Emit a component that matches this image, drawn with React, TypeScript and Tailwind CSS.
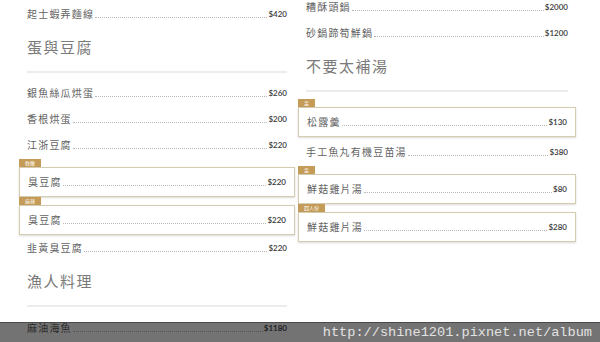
import React from 'react';

type Item = { name: string; price: string; tag?: string };

const font = { fontFamily: '"Noto Sans CJK TC", "Noto Sans", sans-serif' };

const Row: React.FC<{ item: Item }> = ({ item }) => (
  <div className="flex items-center h-[26px] px-[8px]">
    <span className="text-[10px] tracking-[1.2px] text-[#626262] leading-none" style={font}>
      {item.name}
    </span>
    <span className="flex-1 mx-[1px] self-center mt-[7px] border-b border-dotted border-[#b8b8b8]" />
    <span className="text-[8px] font-semibold text-[#3a3a3a] leading-none font-['Lato',sans-serif]">
      {item.price}
    </span>
  </div>
);

const BoxedRow: React.FC<{ item: Item }> = ({ item }) => (
  <div className="flex flex-col">
    <div
      className="self-start h-[8px] px-[6px] bg-[#c49b57] text-white text-[5px] leading-[8px]"
      style={font}
    >
      {item.tag}
    </div>
    <div className="h-[30px] flex flex-col justify-center border border-[#d3ccb1] shadow-[0_1px_2px_rgba(0,0,0,0.15)] bg-white">
      <Row item={item} />
    </div>
  </div>
);

const Heading: React.FC<{ title: string }> = ({ title }) => (
  <div className="h-[46px] flex flex-col justify-end mx-[8px]">
    <div
      className="text-[15px] tracking-[1.5px] text-[#7a7a7a] leading-none mb-[17px]"
      style={font}
    >
      {title}
    </div>
    <div className="h-[2px] bg-[#ececec]" />
  </div>
);

const App: React.FC = () => {
  return (
    <div className="relative w-[600px] h-[342px] bg-white overflow-hidden">
      <div className="flex pl-[19px]">
        {/* Left column */}
        <div className="w-[276px] flex flex-col pt-[1px]">
          <Row item={{ name: '起士蝦弄麵線', price: '$420' }} />
          <Heading title="蛋與豆腐" />
          <div className="h-[7px]" />
          <Row item={{ name: '銀魚絲瓜烘蛋', price: '$260' }} />
          <Row item={{ name: '香根烘蛋', price: '$200' }} />
          <Row item={{ name: '江浙豆腐', price: '$220' }} />
          <div className="h-[1px]" />
          <BoxedRow item={{ name: '臭豆腐', price: '$220', tag: '軟嫩' }} />
          <BoxedRow item={{ name: '臭豆腐', price: '$220', tag: '麻辣' }} />
          <Row item={{ name: '韭黃臭豆腐', price: '$220' }} />
          <Heading title="漁人料理" />
          <div className="h-[8px]" />
          <Row item={{ name: '麻油海魚', price: '$1180' }} />
        </div>

        {/* Right column */}
        <div className="w-[278px] ml-[3px] flex flex-col mt-[-6px]">
          <Row item={{ name: '糟酥頭鍋', price: '$2000' }} />
          <Row item={{ name: '砂鍋蹄筍鮮鍋', price: '$1200' }} />
          <Heading title="不要太補湯" />
          <div className="h-[7px]" />
          <BoxedRow item={{ name: '松露羹', price: '$130', tag: '盅' }} />
          <div className="h-[2px]" />
          <Row item={{ name: '手工魚丸有機豆苗湯', price: '$380' }} />
          <div className="h-[1px]" />
          <BoxedRow item={{ name: '鮮菇雞片湯', price: '$80', tag: '盅' }} />
          <BoxedRow item={{ name: '鮮菇雞片湯', price: '$280', tag: '四人份' }} />
        </div>
      </div>

      {/* Watermark strip */}
      <div className="absolute left-0 right-0 bottom-0 h-[20px] bg-black/55 border-t border-[#4a4a4a] flex items-center justify-end pr-[8px]">
        <span className="text-[13.6px] text-[#e2e2e2] leading-none font-['Liberation_Mono',monospace]">
          http://shine1201.pixnet.net/album
        </span>
      </div>
    </div>
  );
};

export default App;
